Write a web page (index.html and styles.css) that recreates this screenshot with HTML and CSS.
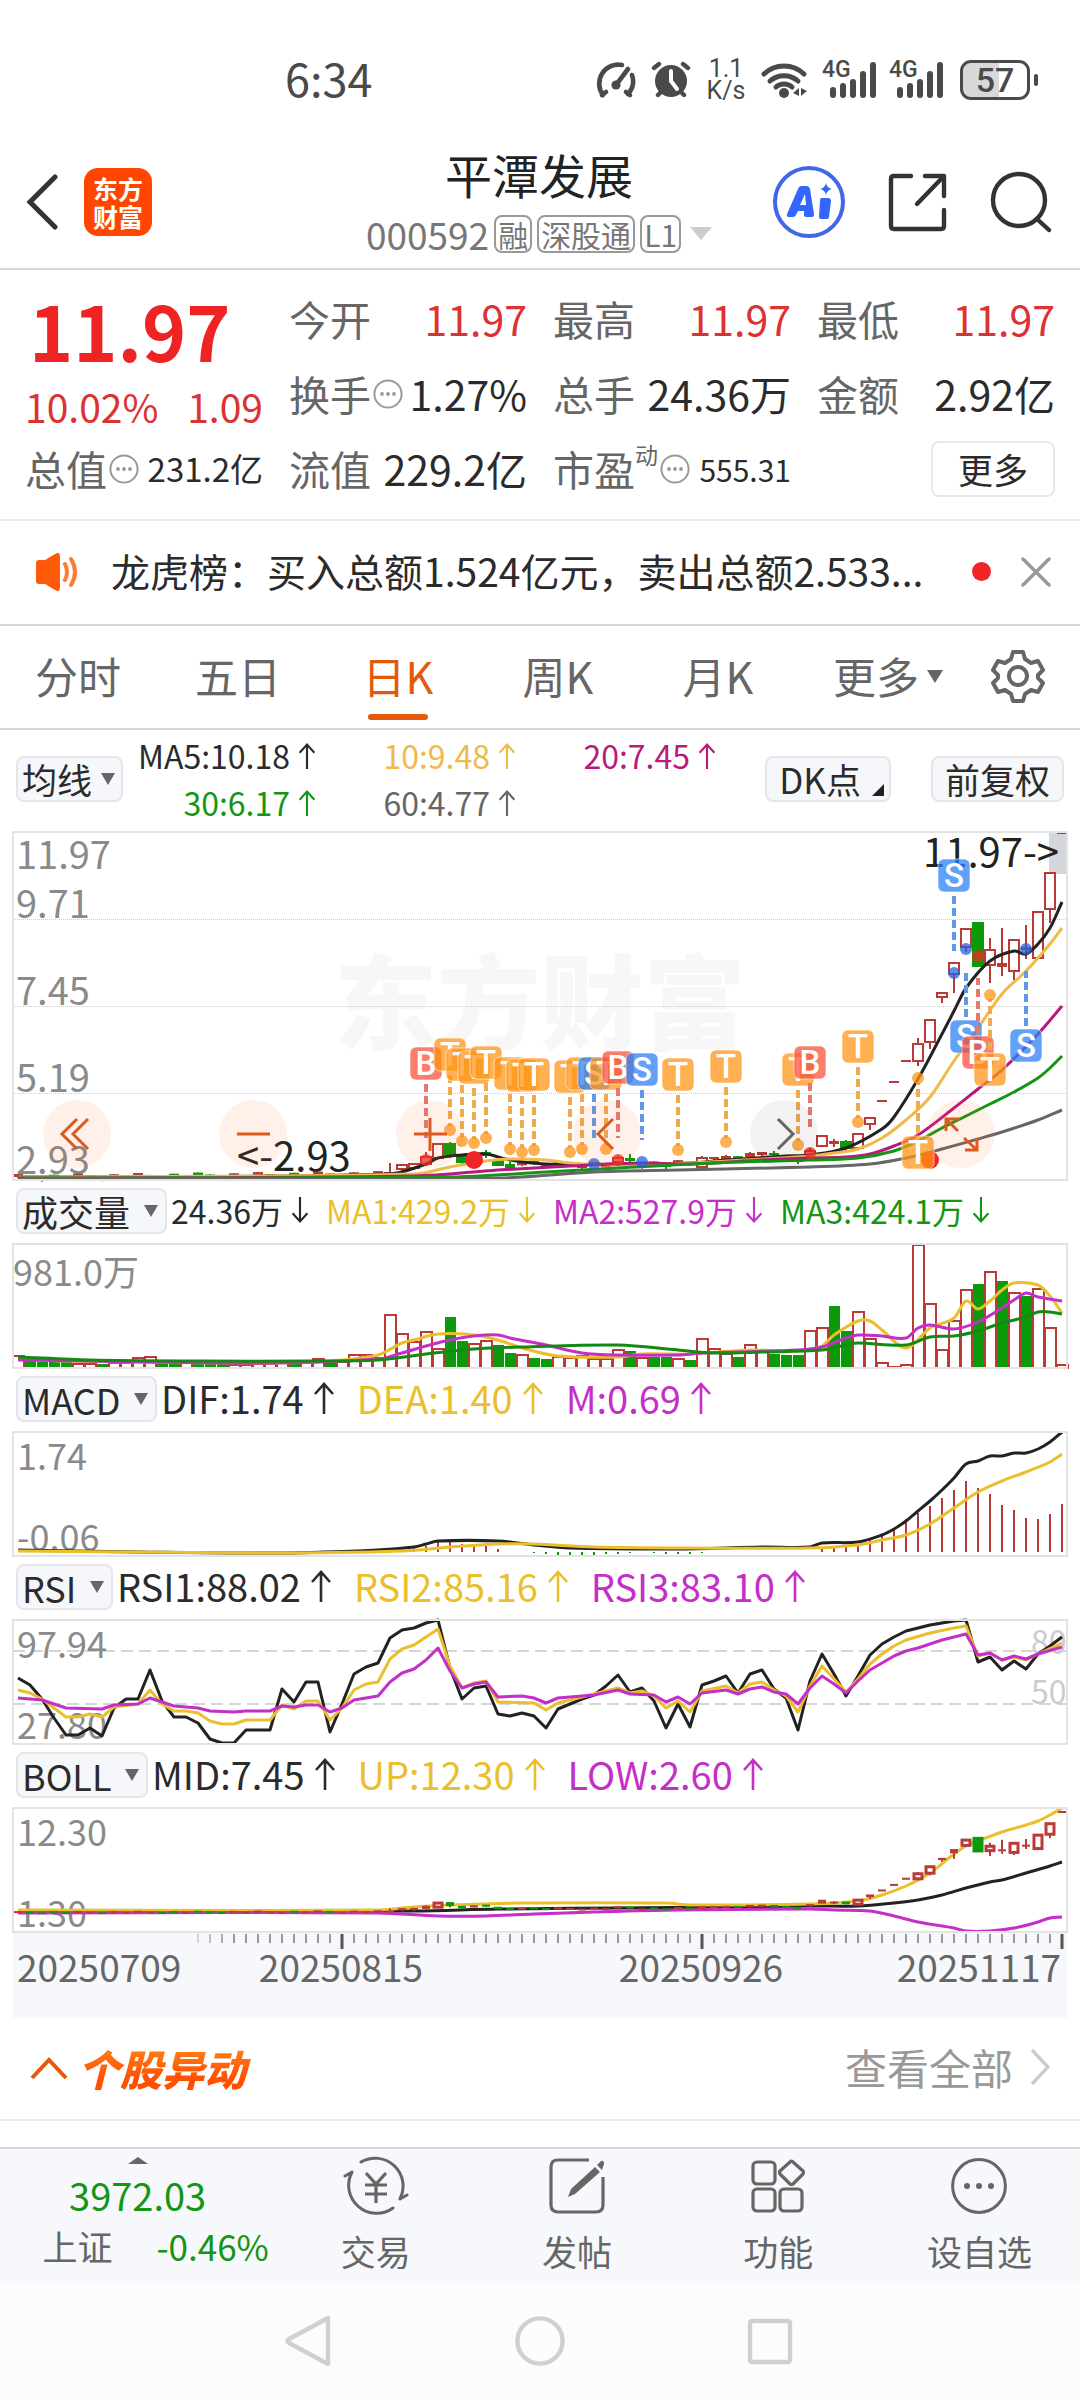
FILE: index.html
```html
<!DOCTYPE html>
<html lang="zh-CN">
<head>
<meta charset="utf-8">
<meta name="viewport" content="width=device-width">
<title>平潭发展 000592</title>
<link rel="stylesheet" href="styles.css">
</head>
<body>
<svg class="defs" aria-hidden="true">
  <symbol id="up" viewBox="0 0 22 34"><path d="M11 33V3M2 13l9-10 9 10" fill="none" stroke="currentColor" stroke-width="2.6"/></symbol>
  <symbol id="down" viewBox="0 0 22 34"><path d="M11 1v30M2 21l9 10 9-10" fill="none" stroke="currentColor" stroke-width="2.6"/></symbol>
  <symbol id="info" viewBox="0 0 30 30"><circle cx="15" cy="15" r="13.6" fill="none" stroke="#999" stroke-width="2"/><circle cx="9" cy="15" r="1.9" fill="#999"/><circle cx="15" cy="15" r="1.9" fill="#999"/><circle cx="21" cy="15" r="1.9" fill="#999"/></symbol>
  <symbol id="bars" viewBox="0 0 54 38"><g stroke="#4a4a4a" stroke-width="6" stroke-linecap="round"><path d="M11 29v5M21 25v9M31 21v13M41 13v21M51 4v30"/></g></symbol>
</svg>

<div class="status">
  <span class="time">6:34</span>
  <div class="status-icons">
    <svg width="44" height="38" viewBox="0 0 44 38"><g fill="none" stroke="#4a4a4a" stroke-width="4.6" stroke-linecap="round"><path d="M28 4A19 19 0 0 0 9 34"/><path d="M8 34l4-3M36 34l-4-3"/><path d="M38 14A19 19 0 0 1 34 33"/><path d="M22 24L34 8"/></g><circle cx="22" cy="24" r="4.6" fill="#4a4a4a"/></svg>
    <svg width="40" height="38" viewBox="0 0 40 38"><circle cx="20" cy="20" r="16" fill="#4a4a4a"/><g stroke="#4a4a4a" stroke-width="4.4" stroke-linecap="round"><path d="M3 7l5-4M37 7l-5-4M7 34l5-5M33 34l-5-5"/></g><path d="M20 10v10l6 8" fill="none" stroke="#fff" stroke-width="4" stroke-linecap="round"/></svg>
    <span class="speed"><span>1.1</span><span>K/s</span></span>
    <svg class="wifi" width="48" height="38" viewBox="0 0 48 38"><g fill="none" stroke="#4a4a4a" stroke-width="5" stroke-linecap="round"><path d="M3 13a29 29 0 0 1 40 0"/><path d="M9 20a21 21 0 0 1 28 0"/><path d="M15 26a12 12 0 0 1 16 0"/></g><circle cx="23" cy="32" r="5" fill="#4a4a4a"/><path d="M38 27v8l-6-3zM40 27v8l6-5z" fill="#4a4a4a"/></svg>
    <span class="signal"><span class="net">4G</span><svg width="54" height="38"><use href="#bars"/></svg></span>
    <span class="signal"><span class="net">4G</span><svg width="54" height="38"><use href="#bars"/></svg></span>
    <span class="battery">57</span>
  </div>
</div>

<header class="header">
  <div class="side">
    <button class="icon-btn" aria-label="返回"><svg width="34" height="56" viewBox="0 0 34 56"><path d="M29 3L4 28l25 25" fill="none" stroke="#333" stroke-width="5" stroke-linecap="round"/></svg></button>
    <a class="logo" href="#" aria-label="东方财富"><span>东方</span><span>财富</span></a>
  </div>
  <div class="title">
    <h1>平潭发展</h1>
    <div class="code"><span>000592</span><span class="tag">融</span><span class="tag">深股通</span><span class="tag">L1</span><i class="tri"></i></div>
  </div>
  <div class="side end">
    <button class="icon-btn" aria-label="AI"><svg width="74" height="74" viewBox="0 0 74 74"><circle cx="37" cy="37" r="34" fill="none" stroke="#4067e6" stroke-width="4"/><path d="M15 49q-1 3 2 3h4q2 0 3-2l2-4h6v4q0 2 2 2h6q2 0 2-3l-4-25q-1-3-3-3h-5q-3 0-4 3zM28 40l5-11 1 11z" fill="#3366ff"/><path d="M49 33h7q3 0 3 3l-2 16q0 2-3 2h-5q-2 0-2-2l1-16q0-3 1-3zM54 18q1 5 6 6-5 1-6 6-1-5-6-6 5-1 6-6z" fill="#3366ff"/></svg></button>
    <button class="icon-btn" aria-label="分享"><svg width="60" height="60" viewBox="0 0 60 60"><g fill="none" stroke="#333" stroke-width="4.4" stroke-linecap="round" stroke-linejoin="round"><path d="M23 4H6q-3 0-3 3v47q0 3 3 3h47q3 0 3-3V38"/><path d="M37 4h19v20M55 5L29 32"/></g></svg></button>
    <button class="icon-btn" aria-label="搜索"><svg width="62" height="62" viewBox="0 0 62 62"><g fill="none" stroke="#333" stroke-width="4.4" stroke-linecap="round"><circle cx="29" cy="29" r="26"/><path d="M47 48l12 11"/></g></svg></button>
  </div>
</header>

<section class="quote">
  <div class="now">
    <strong>11.97</strong>
    <div class="chg"><span>10.02%</span><span>1.09</span></div>
  </div>
  <dl class="kv"><dt>今开</dt><dd class="red">11.97</dd></dl>
  <dl class="kv"><dt>最高</dt><dd class="red">11.97</dd></dl>
  <dl class="kv"><dt>最低</dt><dd class="red">11.97</dd></dl>
  <dl class="kv"><dt>换手<svg width="30" height="30"><use href="#info"/></svg></dt><dd>1.27%</dd></dl>
  <dl class="kv"><dt>总手</dt><dd>24.36万</dd></dl>
  <dl class="kv"><dt>金额</dt><dd>2.92亿</dd></dl>
  <dl class="kv"><dt>总值<svg width="30" height="30"><use href="#info"/></svg></dt><dd class="mid">231.2亿</dd></dl>
  <dl class="kv"><dt>流值</dt><dd>229.2亿</dd></dl>
  <dl class="kv"><dt>市盈<sup>动</sup><svg width="30" height="30"><use href="#info"/></svg></dt><dd class="small">555.31</dd></dl>
  <button class="more">更多</button>
</section>

<section class="news">
  <svg width="44" height="38" viewBox="0 0 44 38"><path d="M2 10q0-3 3-3h6L21 1q5-3 5 3v30q0 6-5 3l-10-6H5q-3 0-3-3z" fill="#ff5a0a"/><path d="M31 11q4 8 0 16M37 6q8 13 0 26" fill="none" stroke="#ff7a35" stroke-width="4" stroke-linecap="round"/></svg>
  <a href="#">龙虎榜：买入总额1.524亿元，卖出总额2.533...</a>
  <i class="dot"></i>
  <button class="icon-btn" aria-label="关闭"><svg width="30" height="30" viewBox="0 0 30 30"><path d="M2 2l26 26M28 2L2 28" stroke="#999" stroke-width="3.4" stroke-linecap="round"/></svg></button>
</section>

<nav class="tabs">
  <button>分时</button><button>五日</button><button class="on">日K</button><button>周K</button><button>月K</button>
  <button>更多<i class="tri"></i></button>
  <button class="gear" aria-label="设置"><svg width="54" height="54" viewBox="0 0 54 54"><g fill="none" stroke="#666" stroke-width="4" stroke-linejoin="round"><path d="M22 3h10l2 7 6 4 7-2 5 9-5 5v3l5 5-5 9-7-2-6 4-2 7H22l-2-7-6-4-7 2-5-9 5-5v-3l-5-5 5-9 7 2 6-4z"/><circle cx="27" cy="27" r="9"/></g></svg></button>
</nav>

<main class="charts">
  <div class="ma-bar">
    <label class="pick"><select aria-label="主图指标"><option>均线</option></select></label>
    <div class="ma-values">
      <span>MA5:10.18<svg><use href="#up"/></svg></span><span class="c-amber">10:9.48<svg><use href="#up"/></svg></span><span class="c-pink">20:7.45<svg><use href="#up"/></svg></span>
      <span class="c-green">30:6.17<svg><use href="#up"/></svg></span><span class="c-gray">60:4.77<svg><use href="#up"/></svg></span>
    </div>
    <button class="chip corner">DK点</button>
    <button class="chip">前复权</button>
  </div>
  <div class="kline">
    <svg id="kline" class="plot" viewBox="0 0 1054 348"></svg>
    <div class="controls">
      <button aria-label="最早"><svg viewBox="0 0 68 68"><path d="M34 19L19 34l15 15M45 19L30 34l15 15"/></svg></button>
      <button aria-label="缩小"><svg viewBox="0 0 68 68"><path d="M18 34h33"/></svg></button>
      <button aria-label="放大"><svg viewBox="0 0 68 68"><path d="M18 34h33M34 18v33"/></svg></button>
      <button aria-label="向左"><svg viewBox="0 0 68 68"><path d="M40 19L25 34l15 15"/></svg></button>
      <button class="off" aria-label="向右"><svg viewBox="0 0 68 68"><path d="M28 19l15 15-15 15"/></svg></button>
      <button aria-label="全屏"><svg viewBox="0 0 68 68"><path d="M31 31L19 19M19 31V19h14M37 38l13 12M50 38v12H38"/></svg></button>
    </div>
  </div>

  <div class="ind-bar tight">
    <label class="pick"><select aria-label="副图一"><option>成交量</option></select></label>
    <span>24.36万<svg><use href="#down"/></svg></span><span class="c-gold">MA1:429.2万<svg><use href="#down"/></svg></span><span class="c-violet">MA2:527.9万<svg><use href="#down"/></svg></span><span class="c-green">MA3:424.1万<svg><use href="#down"/></svg></span>
  </div>
  <svg id="vol" class="plot" viewBox="0 0 1054 124"></svg>

  <div class="ind-bar">
    <label class="pick"><select aria-label="副图二"><option>MACD</option></select></label>
    <span>DIF:1.74<svg><use href="#up"/></svg></span><span class="c-gold">DEA:1.40<svg><use href="#up"/></svg></span><span class="c-violet">M:0.69<svg><use href="#up"/></svg></span>
  </div>
  <svg id="macd" class="plot" viewBox="0 0 1054 124"></svg>

  <div class="ind-bar">
    <label class="pick"><select aria-label="副图三"><option>RSI</option></select></label>
    <span>RSI1:88.02<svg><use href="#up"/></svg></span><span class="c-gold">RSI2:85.16<svg><use href="#up"/></svg></span><span class="c-violet">RSI3:83.10<svg><use href="#up"/></svg></span>
  </div>
  <svg id="rsi" class="plot" viewBox="0 0 1054 124"></svg>

  <div class="ind-bar">
    <label class="pick"><select aria-label="副图四"><option>BOLL</option></select></label>
    <span>MID:7.45<svg><use href="#up"/></svg></span><span class="c-gold">UP:12.30<svg><use href="#up"/></svg></span><span class="c-violet">LOW:2.60<svg><use href="#up"/></svg></span>
  </div>
  <svg id="boll" class="plot" viewBox="0 0 1054 124"></svg>
  <svg id="axis" class="axis" viewBox="0 0 1054 86"></svg>
</main>

<section class="moves">
  <svg width="38" height="24" viewBox="0 0 38 24"><path d="M2 22L19 4l17 18" fill="none" stroke="#e35a0c" stroke-width="4"/></svg>
  <h2>个股异动</h2>
  <a href="#">查看全部<svg width="20" height="38" viewBox="0 0 20 38"><path d="M2 2l16 17L2 36" fill="none" stroke="#ccc" stroke-width="3.4"/></svg></a>
</section>

<footer class="dock">
  <a class="index" href="#"><i class="tri-up"></i><b>3972.03</b><span class="row"><span>上证</span><em>-0.46%</em></span></a>
  <a href="#"><svg width="66" height="60" viewBox="0 0 66 60"><g fill="none" stroke="#666" stroke-width="3" stroke-linecap="round" stroke-linejoin="round"><path d="M18 6A28 28 0 0 1 57 43l7-4"/><path d="M50 52A28 28 0 0 1 9 16l-7 4"/></g><path d="M23 17l10 11 10-11M33 28v19M22 29h22M22 38h22" fill="none" stroke="#666" stroke-width="3.2"/></svg>交易</a>
  <a href="#"><svg width="66" height="60" viewBox="0 0 66 60"><path d="M45 4H14q-7 0-7 7v38q0 7 7 7h38q7 0 7-7V21" fill="none" stroke="#666" stroke-width="3.2"/><path d="M51 11l5 5L31 38l-7 3 3-8zM53 9l4-4q3-1 3 3l-2 6z" fill="#666"/></svg>发帖</a>
  <a href="#"><svg width="66" height="60" viewBox="0 0 66 60"><g fill="none" stroke="#666" stroke-width="3.2" stroke-linejoin="round"><rect x="8" y="6" width="22" height="22" rx="4"/><rect x="8" y="33" width="22" height="22" rx="4"/><rect x="35" y="33" width="22" height="22" rx="4"/><path d="M46 5q1 0 2 1l10 9q1 2 0 3L48 28q-2 1-3 0L35 18q-1-2 0-3L45 6z"/></g></svg>功能</a>
  <a href="#"><svg width="66" height="60" viewBox="0 0 66 60"><circle cx="33" cy="30" r="26.4" fill="none" stroke="#666" stroke-width="3"/><g fill="#666"><circle cx="21" cy="30" r="3"/><circle cx="33" cy="30" r="3"/><circle cx="45" cy="30" r="3"/></g></svg>设自选</a>
</footer>

<nav class="sys">
  <button class="icon-btn" aria-label="返回"><svg width="54" height="54" viewBox="0 0 54 54"><path d="M45 4v46L6 29q-3-2 0-4z" fill="none" stroke="#d0d0d0" stroke-width="4.4" stroke-linejoin="round"/></svg></button>
  <button class="icon-btn" aria-label="主页"><svg width="54" height="54" viewBox="0 0 54 54"><circle cx="27" cy="27" r="22.6" fill="none" stroke="#d0d0d0" stroke-width="4.4"/></svg></button>
  <button class="icon-btn" aria-label="最近"><svg width="54" height="54" viewBox="0 0 54 54"><rect x="7" y="7" width="40" height="41" rx="2" fill="none" stroke="#d0d0d0" stroke-width="4.4"/></svg></button>
</nav>
<script src="charts.js"></script>
</body>
</html>
```
FILE: styles.css
```css
* { box-sizing: border-box; }
body {
  margin: 0;
  background: #fff;
  color: #2b2b2b;
  font-family: "Noto Sans CJK SC", "Noto Sans", sans-serif;
  font-size: 36px;
  line-height: 1.2;
}
h1, h2, dl, dt, dd { margin: 0; font-weight: 400; }
a { color: inherit; text-decoration: none; }
button, select { font: inherit; color: inherit; background: none; border: 0; padding: 0; margin: 0; }
svg { display: block; flex: none; }
.defs { width: 0; height: 0; position: absolute; }
.icon-btn { display: flex; }
.tri { width: 0; height: 0; border: 8px solid transparent; border-top: 13px solid #666; border-bottom: 0; }

.c-amber { color: #f0b94a; }
.c-gold { color: #ebbf2c; }
.c-pink { color: #b8197c; }
.c-violet { color: #c42fc8; }
.c-green { color: #149614; }
.c-gray { color: #666; }
.red { color: #dc3232; }

.status {
  display: flex;
  justify-content: space-between;
  align-items: center;
  height: 135px;
  padding: 24px 50px 0 285px;
  color: #4a4a4a;
}
.time { font-size: 45px; line-height: 58px; padding-bottom: 3px; }
.status-icons { display: flex; align-items: center; gap: 13px; }
.speed { display: flex; flex-direction: column; align-items: center; width: 44px; font: 25px/22px Roboto, sans-serif; }
.signal { position: relative; }
.net { position: absolute; left: 0; top: 0; font: 500 23px/18px Roboto, sans-serif; }
.battery {
  position: relative;
  width: 70px;
  height: 40px;
  margin-left: 4px;
  border: 3px solid #4a4a4a;
  border-radius: 11px;
  background: linear-gradient(90deg, #d8d8d8 57%, #fff 57%);
  font: 500 34px/34px Roboto, sans-serif;
  text-align: center;
}
.battery::after { content: ""; position: absolute; right: -11px; top: 11px; width: 4px; height: 12px; border-radius: 2px; background: #4a4a4a; }

.header {
  display: grid;
  grid-template-columns: 1fr auto 1fr;
  align-items: center;
  height: 135px;
  padding: 0 28px 0 26px;
  border-bottom: 2px solid #d8d8d8;
}
.side { display: flex; align-items: center; gap: 24px; }
.side.end { justify-content: flex-end; gap: 42px; }
.logo {
  display: flex;
  flex-direction: column;
  align-items: center;
  justify-content: center;
  width: 68px;
  height: 68px;
  border-radius: 14px;
  background: #ff4600;
  color: #fff;
  font-weight: 700;
  font-size: 25px;
  line-height: 28px;
}
.title { text-align: center; }
h1 { font-size: 47px; line-height: 64px; color: #222; }
.code { display: flex; align-items: center; justify-content: center; gap: 5px; font-size: 37px; line-height: 56px; color: #777; }
.tag { border: 2px solid #999; border-radius: 8px; padding: 0 2px; font-size: 30px; line-height: 34px; }
.code .tri { border-top-color: #ccc; border-left-width: 11px; border-right-width: 11px; margin-left: 4px; }

.quote {
  display: grid;
  grid-template-columns: repeat(4, 1fr);
  column-gap: 26px;
  grid-auto-rows: 75px;
  padding: 11px 25px 13px 25px;
  border-bottom: 2px solid #ebebeb;
}
.now { grid-row: span 2; color: #dc3232; }
.now strong { display: block; padding-left: 4px; font-size: 75px; line-height: 98px; color: #ee2424; }
.chg { display: flex; justify-content: space-between; font-size: 39px; line-height: 54px; }
.kv { display: flex; align-items: center; justify-content: space-between; font-size: 41px; white-space: nowrap; min-width: 0; }
.kv dt { display: flex; align-items: center; color: #666; }
.kv dt svg { margin-left: 2px; }
.kv sup { align-self: flex-start; font-size: 23px; line-height: 20px; }
.kv .mid { font-size: 33px; }
.kv .small { font-size: 30px; }
.more { justify-self: end; align-self: center; width: 124px; height: 56px; border: 2px solid #e6e8ea; border-radius: 8px; font-size: 35px; line-height: 46px; }

.news { display: flex; align-items: center; height: 105px; padding: 0 29px 2px 34px; border-bottom: 2px solid #d8d8d8; font-size: 39px; }
.news a { flex: 1; margin-left: 33px; padding-bottom: 2px; white-space: nowrap; }
.dot { width: 19px; height: 19px; border-radius: 50%; background: #f02424; margin-right: 30px; }

.tabs { display: grid; grid-template-columns: repeat(5, 16fr) 18fr 10fr; height: 104px; border-bottom: 2px solid #d8d8d8; font-size: 43px; color: #666; }
.tabs button { position: relative; display: flex; align-items: center; justify-content: center; gap: 8px; padding: 0 4px 2px 0; }
.tabs .on { color: #e35a0c; }
.tabs .on::after { content: ""; position: absolute; left: calc(50% - 32px); bottom: 8px; width: 60px; height: 6px; border-radius: 3px; background: #e35a0c; }
.tabs .gear { padding-right: 24px; }

.charts { padding: 0 13px; }
.pick { position: relative; display: flex; }
.pick::after { content: ""; position: absolute; right: 9px; top: 17px; border: 7px solid transparent; border-top: 12px solid #666; border-bottom: 0; pointer-events: none; }
.pick select, .chip {
  appearance: none;
  height: 46px;
  border: 2px solid #e4e6ea;
  border-radius: 8px;
  background: #f6f7fa;
  padding: 0 34px 0 4px;
  line-height: 38px;
  color: #2b2b2b;
}
.ma-bar { display: flex; align-items: center; height: 102px; padding: 0 3px 4px; }
.ma-bar .pick select { padding-right: 28px; font-size: 35px; }
.ma-bar .pick::after { right: 8px; }
.ma-values { display: grid; grid-template-columns: 193px 200px 200px; margin-right: auto; font-size: 32px; line-height: 47px; }
.ma-values span { display: flex; align-items: center; justify-content: flex-end; gap: 8px; }
.ma-values svg { width: 18px; height: 28px; }
.chip { position: relative; padding: 0 12px; font-size: 35px; }
.chip.corner { padding-right: 28px; margin-right: 40px; }
.chip.corner::after { content: ""; position: absolute; right: 5px; bottom: 4px; border: 6px solid transparent; border-right-color: #222; border-bottom-color: #222; }

.ind-bar { display: flex; align-items: center; height: 64px; padding: 0 4px 3px 3px; font-size: 38px; line-height: 46px; white-space: nowrap; }
.ind-bar .pick { margin-right: 4px; font-size: 36px; }
.ind-bar span { display: flex; align-items: center; gap: 9px; margin-right: 22px; padding-bottom: 2px; }
.ind-bar span svg { width: 22px; height: 34px; }
.ind-bar.tight { font-size: 32px; }
.ind-bar.tight span { margin-right: 17px; gap: 8px; }
.ind-bar.tight span svg { width: 18px; }

.plot, .axis { width: 100%; height: auto; overflow: visible; outline: 2px solid #e3e3e3; outline-offset: -1px; }
.axis { outline: 0; background: #f7f8fb; }
.plot text, .axis text { font-size: 36px; fill: #8a8a8a; }
.plot .big { font-size: 38px; }
.plot .ink { fill: #222; font-size: 40px; }
.plot .faint { font-size: 32px; fill: #ccc; }
.plot .mark { fill: #f7f7f7; font-size: 103px; font-weight: 900; }
.plot .badge { fill: #fff; font: 500 33px Roboto, sans-serif; text-anchor: middle; }
.axis text { fill: #666; font-size: 37px; }

.kline { position: relative; }
.controls { position: absolute; left: 2.8%; right: 6.8%; bottom: 12px; display: flex; justify-content: space-between; }
.controls button { width: 68px; height: 68px; border-radius: 50%; background: rgba(255, 110, 50, 0.1); }
.controls path { fill: none; stroke: #d95c1c; stroke-width: 3; }
.controls .off { background: rgba(0, 0, 0, 0.05); }
.controls .off path { stroke: #666; }

.moves { display: flex; align-items: center; height: 103px; padding: 0 30px 2px 30px; border-bottom: 2px solid #ebebeb; }
.moves h2 { margin-left: 10px; margin-right: auto; padding-right: 8px; font-size: 42px; line-height: 56px; font-weight: 900; font-style: italic; background: linear-gradient(#ff8a1a, #ff5000 70%); -webkit-background-clip: text; background-clip: text; color: transparent; }
.moves a { display: flex; align-items: center; gap: 17px; font-size: 42px; color: #999; }

.dock { display: grid; grid-template-columns: 275fr repeat(4, 201fr); height: 136px; margin-top: 26px; background: #f7f8fb; border-top: 2px solid #d5d8dc; color: #666; font-size: 35px; }
.dock a { display: flex; flex-direction: column; align-items: center; gap: 12px; padding-top: 7px; line-height: 46px; }
.dock .index { gap: 0; padding-top: 8px; }
.index b { font-weight: 400; font-size: 38px; line-height: 62px; color: #149614; }
.index .row { display: flex; gap: 44px; padding-left: 36px; line-height: 40px; }
.index em { font-style: normal; color: #149614; }
.tri-up { width: 0; height: 0; border: 10px solid transparent; border-bottom: 7px solid #666; border-top: 0; }

.sys { display: flex; justify-content: center; gap: 176px; padding: 31px 0 33px; background: #fcfcfc; }
```
FILE: charts.js
```js
const RED = '#b93a36', GREEN = '#0a9a0a', GOLD = '#ebbf2c', VIOLET = '#c42fc8', INK = '#222';
const COUNT = 88, STEP = 12, START = 5;
const X = i => START + STEP * i;

const line = (pts, color, w = 3) =>
  `<polyline fill="none" stroke="${color}" stroke-width="${w}" stroke-linejoin="round" points="${pts.map(p => X(p[0]) + ',' + p[1]).join(' ')}"/>`;

// smooth curve through the points
function curve(pts, color, w = 3) {
  const q = pts.map(p => [X(p[0]), p[1]]);
  let d = `M${q[0]}`;
  for (let i = 0; i < q.length - 1; i++) {
    const a = q[i - 1] || q[i], b = q[i], c = q[i + 1], e = q[i + 2] || c;
    const k = (c[0] - b[0]) / 3;
    const s1 = c[0] > a[0] ? (c[1] - a[1]) / (c[0] - a[0]) : 0;
    const s2 = e[0] > b[0] ? (e[1] - b[1]) / (e[0] - b[0]) : 0;
    d += `C${b[0] + k} ${b[1] + k * s1} ${c[0] - k} ${c[1] - k * s2} ${c}`;
  }
  return `<path fill="none" stroke="${color}" stroke-width="${w}" d="${d}"/>`;
}
const text = (x, y, t, c = '') => `<text x="${x}" y="${y}" class="${c}">${t}</text>`;
function at(pts, i) {
  for (let k = 1; k < pts.length; k++) {
    if (pts[k][0] >= i) {
      const [a, b] = [pts[k - 1], pts[k]];
      return b[0] === a[0] ? a[1] : a[1] + (b[1] - a[1]) * (i - a[0]) / (b[0] - a[0]);
    }
  }
  return pts[pts.length - 1][1];
}

const volume = ('12r 7g 6g 6g 6g 4r 4r 4g 5r 5r 10r 11r 6g 5g 5r 5g 4g 4g 3r 3r 4r 4r 7r 4g 7r 9r 5g 6r 13r 13r ' +
  '10r 53r 34r 26r 36r 19r 51g 27g 24r 27r 23g 15g 13r 10g 9g 11r 10r 12r 9r 9r 18r 17g 10r 11g 11g 9r 8g 29r 19r 14r ' +
  '11g 23r 18r 14g 13g 13g 37r 40r 62g 37g 56r 29r 5r 1r 3r 123r 64r 18r 47r 78r 84g 96r 87g 75r 72g 79r 40r 3r')
  .split(' ').map(s => [parseInt(s), s.slice(-1)]);

const ma5 = [[0,345],[31,342],[34,332],[35,326],[37,323],[39,322],[41,328],[44,332],[50,332],[56,331],[59,328],[64,324],[66,323],[69,316],[72,297],[73,285],[75,247],[77,202],[78,179],[79,156],[81,129],[83,119],[84,122],[85,112],[86,96],[87,70]];
const ma10 = [[0,345],[33,342],[36,335],[39,329],[41,327],[44,328],[46,331],[50,333],[56,331],[62,327],[66,324],[68,321],[70,317],[72,306],[74,288],[76,265],[78,229],[80,196],[82,162],[84,139],[86,112],[87,96]];
const ma20 = [[0,346],[33,344],[40,338],[46,334],[52,331],[56,332],[62,328],[66,326],[69,325],[71,322],[73,314],[75,303],[78,276],[80,257],[82,238],[85,202],[87,174]];
const ma30 = [[0,346],[36,345],[44,340],[50,336],[58,331],[66,328],[70,326],[73,319],[75,309],[77,296],[79,284],[81,272],[83,260],[85,246],[86,236],[87,224]];
const ma60 = [[0,347],[40,346],[48,340],[55,338],[66,335],[71,332],[74,326],[77,317],[80,307],[82,300],[85,288],[87,278]];

// bar: index, body top, body bottom, high, low, colour
const candles = [
  [31,341,345,331,345,'r'],[32,333,337,333,340,'r'],[33,332,336,331,338,'r'],[34,325,332,320,334,'r'],[35,312,326,312,326,'r'],
  [36,312,322,310,326,'g'],[37,325,330,322,332,'g'],[38,323,327,321,330,'r'],[39,321,324,318,326,'g'],[40,328,333,326,333,'g'],[41,333,336,330,336,'g'],
  [50,326,330,324,331,'r'],[51,327,329,322,331,'g'],[54,334,335,333,337,'g'],[57,326,335,324,335,'r'],[58,326,327,325,328,'r'],[59,325,328,323,329,'r'],
  [61,322,325,320,328,'r'],[62,321,323,320,324,'r'],[63,322,323,319,325,'g'],[65,328,330,326,332,'g'],[66,319,323,316,325,'r'],
  [67,304,314,304,314,'r'],[68,310,312,307,315,'r'],[69,310,316,308,318,'g'],[70,302,316,302,316,'r'],[71,286,292,286,298,'r'],
  [72,269,269,269,269,'r'],[73,250,250,250,250,'r'],[74,229,229,229,229,'r'],[75,212,229,206,234,'r'],[76,188,210,188,217,'r'],
  [77,161,165,161,171,'r'],[78,131,142,131,161,'r'],[79,97,115,97,120,'r'],[80,91,134,91,134,'g'],[81,118,133,106,151,'r'],
  [82,132,135,96,144,'r'],[83,108,139,108,148,'r'],[84,116,118,93,127,'r'],[85,80,126,80,126,'r'],[86,41,77,41,91,'r'],[87,1,1,1,1,'r']];
const known = new Set(candles.map(c => c[0]));
for (let i = 0; i < 66; i++) {
  if (known.has(i)) continue;
  const y = at(ma5, i) + (i * 7 % 5) - 2;
  candles.push([i, y, y + 2, y - 1, y + 3, volume[i][1]]);
}
function candle([i, t, b, h, l, c], half = 5, sw = 2) {
  const x = X(i), col = c === 'r' ? RED : GREEN;
  let s = `<path stroke="${col}" stroke-width="2" d="M${x} ${h}V${t}M${x} ${b}V${l}"/>`;
  if (b - t < 4) s += `<rect x="${x - half}" y="${t - 1}" width="${half * 2}" height="${Math.max(2, b - t + 1)}" fill="${col}"/>`;
  else s += `<rect x="${x - half}" y="${t}" width="${half * 2}" height="${b - t}" fill="${c === 'r' ? '#fff' : col}" stroke="${col}" stroke-width="${sw}"/>`;
  return s;
}

// trade tags: kind, index, tag centre, dot centre
const tags = [['B',34,232,328],['T',36,223,298],['T',37,233,309],['T',38,236,311],['T',39,231,306],['T',41,242,317],['T',42,244,320],['T',43,243,318],
  ['T',46,245,320],['T',47,242,317],['S',48,242,332],['T',49,242,317],['B',50,236,328],['S',52,238,330],['T',55,243,318],['T',59,235,310],
  ['T',65,238,313],['B',66,231,321],['T',70,215,290],['T',75,321,246],['S',78,44,141],['S',79,205,117],['B',80,221,124],['T',81,238,163],['S',84,214,117]];
const tagFill = { T: '#ff9416', B: '#f8503c', S: '#2b80f8' };
const lineFill = { T: '#f0ab50', B: '#e67870', S: '#5e9ae6' };
const dotFill = { T: '#ff9416', B: '#f02a20', S: '#2862dc' };
function tag([k, i, y, d]) {
  const x = X(i), dir = d > y ? 1 : -1, gap = k === 'T' ? 4 : 22;
  return `<path stroke="${lineFill[k]}" stroke-width="4" stroke-dasharray="8 4" d="M${x} ${y + dir * 20}V${d - dir * gap}"/>
    <circle cx="${x}" cy="${d}" r="6" fill="${dotFill[k]}" fill-opacity=".75"/>
    <rect x="${x - 16}" y="${y - 17}" width="32" height="33" rx="6" fill="${tagFill[k]}" fill-opacity=".74" stroke="#fff" stroke-opacity=".6"/>
    ${text(x, y + 11, k, 'badge')}`;
}
const grid = ys => ys.map(y => `<path stroke="#ccc" stroke-dasharray="1 1" d="M0 ${y}.5H1054"/>`).join('');

document.getElementById('kline').innerHTML =
  text(321, 210, '东方财富', 'mark') + grid([87, 174, 261]) +
  '<rect x="1036" width="18" height="42" fill="#d3d7dc"/>' +
  text(3, 37, '11.97', 'big') + text(3, 86, '9.71', 'big') + text(3, 173, '7.45', 'big') + text(3, 260, '5.19', 'big') + text(3, 342, '2.93', 'big') +
  `<text x="1046" y="35" class="ink" text-anchor="end">11.97-&gt;</text>` + text(224, 339, '&lt;-2.93', 'ink') +
  candles.map(c => candle(c)).join('') +
  curve(ma5, INK) + curve(ma10, '#f0b94a') + curve(ma20, '#b8197c') + curve(ma30, '#149614') + curve(ma60, '#666') +
  '<circle cx="461" cy="328" r="9" fill="#f02424"/><circle cx="917" cy="328" r="9" fill="#f02424"/>' +
  tags.map(tag).join('');

document.getElementById('vol').innerHTML =
  text(0, 42, '981.0万') +
  volume.map(([h, c], i) => c === 'g'
    ? `<rect x="${X(i) - 5}" y="${124 - h}" width="11" height="${h}" fill="${GREEN}"/>`
    : `<rect x="${X(i) - 5}" y="${124 - h}" width="11" height="${h}" fill="#fff" stroke="${RED}" stroke-width="2"/>`).join('') +
  curve([[0,114],[4,117],[20,119],[26,117],[30,111],[32,99],[33,96],[35,90],[38,91],[40,96],[42,104],[45,112],[50,113],[52,110],[56,110],[61,106],[65,107],[67,102],[68,91],[70,77],[71,77],[72,86],[74,104],[76,84],[78,74],[79,57],[80,65],[81,57],[82,46],[83,39],[85,41],[86,52],[87,69]], GOLD) +
  curve([[0,116],[20,119],[30,115],[32,109],[34,102],[36,96],[38,92],[40,91],[41,94],[44,101],[47,109],[50,111],[55,111],[57,109],[60,108],[65,106],[67,103],[69,94],[70,91],[72,92],[74,94],[75,84],[76,81],[78,85],[80,78],[82,64],[83,56],[84,49],[85,53],[87,57]], VIOLET) +
  curve([[0,113],[6,116],[15,117],[24,117],[30,116],[34,110],[38,105],[42,103],[50,101],[55,106],[58,109],[62,108],[67,106],[69,101],[70,99],[74,101],[76,93],[78,92],[80,87],[82,79],[84,73],[85,68],[86,68],[87,70]], '#148a14');

const hist = { 31:2,32:3,33:4,34:6,35:10,36:10,37:8,38:7,39:6,40:3,67:4,68:5,69:6,70:8,71:13,72:18,73:24,74:33,75:39,76:46,77:54,78:62,79:71,80:64,81:58,82:47,83:42,84:34,85:33,86:38,87:48,
  43:-1,44:-2,45:-3,46:-4,47:-3,48:-3,49:-2,50:-2,51:-1,53:-1,54:-2,55:-2,56:-2,57:-1,18:-1,19:-1,20:-1 };
document.getElementById('macd').innerHTML =
  text(4, 38, '1.74') + text(4, 119, '-0.06') +
  Object.entries(hist).map(([i, h]) => `<path stroke="${h > 0 ? RED : GREEN}" stroke-width="2" d="M${X(+i)} 120v${-h}"/>`).join('') +
  curve([[0,118],[10,120],[22,121],[30,118],[33,115],[34,112],[35,109],[40,109],[43,113],[46,116],[55,117],[62,115],[66,115],[67,111],[70,110],[72,103],[73,97],[74,89],[75,79],[76,69],[77,58],[78,46],[79,32],[80,29],[81,24],[82,24],[83,21],[84,21],[85,17],[86,10],[87,0]], INK) +
  curve([[0,119],[20,121],[32,119],[36,115],[40,112],[43,112],[48,115],[56,116],[66,116],[70,113],[72,108],[74,103],[76,92],[78,76],[80,60],[82,49],[84,40],[86,30],[87,22]], GOLD);

const seq = s => s.split(' ').map((y, i) => [i, +y]);
document.getElementById('rsi').innerHTML =
  [31, 84].map(y => `<path stroke="#d5d5d5" stroke-width="2" stroke-dasharray="12 6" d="M0 ${y}H1054"/>`).join('') +
  text(1018, 34, '80', 'faint') + text(1018, 84, '50', 'faint') + text(4, 38, '97.94') + text(4, 119, '27.80') +
  line(seq('58 65 79 98 115 115 108 116 88 79 79 50 81 97 97 103 119 123 123 110 110 110 69 82 62 62 112 84 54 47 43 18 10 8 3 0 48 79 68 66 94 96 93 96 108 89 84 79 75 66 55 72 68 81 108 84 107 65 61 56 73 54 50 69 78 110 61 34 54 76 56 35 24 17 11 8 5 3 1 0 42 37 50 41 49 34 26 17'), INK) +
  line([[0,70],[1,73],[2,79],[4,97],[5,97],[6,94],[7,97],[8,87],[10,84],[11,70],[12,84],[13,91],[14,91],[15,93],[16,101],[17,104],[18,104],[19,100],[21,100],[22,85],[23,89],[24,81],[25,81],[26,100],[27,88],[28,70],[29,64],[30,62],[31,39],[32,29],[33,25],[34,17],[35,9],[36,46],[37,68],[38,63],[39,61],[40,82],[43,83],[44,90],[45,83],[47,77],[50,68],[51,73],[52,71],[53,76],[54,88],[55,81],[56,92],[57,71],[59,66],[60,73],[61,64],[62,62],[63,70],[64,76],[65,92],[66,66],[67,46],[68,59],[69,72],[70,59],[71,44],[72,34],[73,26],[74,20],[76,13],[78,8],[79,6],[80,36],[81,33],[82,40],[83,37],[84,40],[85,34],[87,23]], GOLD) +
  line([[0,78],[2,80],[4,88],[7,89],[8,85],[10,84],[11,78],[13,86],[15,88],[16,91],[18,92],[19,91],[21,91],[22,86],[23,87],[24,85],[25,85],[26,92],[27,88],[28,80],[30,76],[31,62],[32,53],[33,49],[34,40],[35,28],[36,51],[37,68],[38,64],[39,62],[40,77],[42,76],[43,78],[44,83],[45,78],[48,75],[50,70],[51,74],[53,75],[54,82],[55,77],[56,84],[57,73],[59,70],[60,74],[61,69],[62,67],[63,72],[64,74],[65,84],[66,68],[67,56],[68,64],[69,73],[70,61],[71,50],[72,43],[73,36],[74,31],[75,28],[77,20],[79,14],[80,35],[81,33],[82,40],[83,36],[84,39],[85,34],[87,27]], VIOLET);

// same bars on the wider Bollinger price range
const by = y => 3.7 + y * 0.2928;
document.getElementById('boll').innerHTML =
  text(4, 38, '12.30') + text(4, 119, '1.30') +
  curve([[0,104],[33,103],[40,101],[50,100],[66,98],[70,98],[73,95],[75,92],[77,87],[79,80],[81,74],[82,72],[84,65],[86,58],[87,54]], INK) +
  curve([[0,102],[30,102],[33,99],[36,97],[42,95],[54,95],[56,97],[66,96],[70,93],[72,87],[74,78],[76,65],[78,46],[79,38],[80,33],[82,24],[84,17],[85,13],[86,7],[87,0]], GOLD) +
  curve([[0,105],[30,105],[35,108],[39,108],[43,106],[48,104],[55,102],[66,101],[68,102],[71,103],[73,108],[75,114],[77,118],[78,120],[79,123],[81,123],[83,120],[85,114],[86,110],[87,109]], VIOLET) +
  candles.map(([i, t, b, h, l, c]) => candle([i, by(t), by(b), by(h), by(l), c], 4, 3)).join('');

let ticks = '';
for (let i = 15; i < COUNT; i++) {
  const major = i === 27 || i === 57 || i === 87;
  ticks += `<path stroke="${major ? '#555' : '#999'}" stroke-opacity="${Math.min(1, (i - 13) / 5)}" stroke-width="${major ? 3 : 2}" d="M${X(i)} 2V${major ? 17 : 11}"/>`;
}
document.getElementById('axis').innerHTML = ticks + text(4, 50, '20250709') +
  `<text x="328" y="50" text-anchor="middle">20250815</text><text x="688" y="50" text-anchor="middle">20250926</text><text x="1048" y="50" text-anchor="end">20251117</text>`;
```
